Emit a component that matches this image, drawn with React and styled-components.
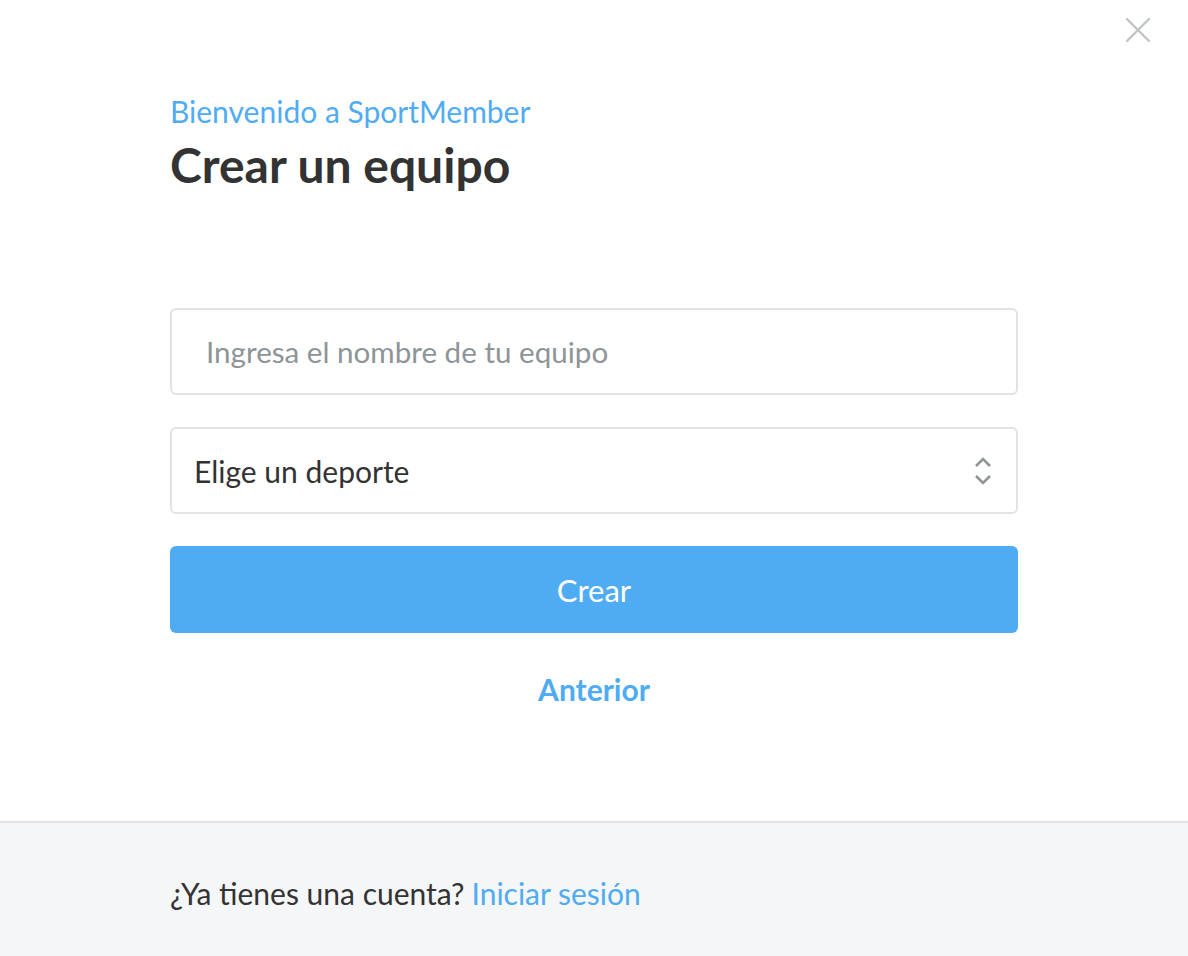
import React from "react";
import styled, { createGlobalStyle } from "styled-components";

const Global = createGlobalStyle`
  html, body { margin: 0; padding: 0; background: #fff; }
  body { font-family: Lato, "Noto Sans", sans-serif; color: #333; }
  * { box-sizing: border-box; }
`;

const Page = styled.div`
  width: 1188px;
  height: 956px;
  display: flex;
  flex-direction: column;
  position: relative;
`;

const Close = styled.button`
  position: absolute;
  top: 18px;
  right: 38px;
  width: 24px;
  height: 24px;
  padding: 0;
  border: none;
  background: none;
  display: flex;
  align-items: center;
  justify-content: center;
`;

const Main = styled.main`
  flex: 1;
  display: flex;
  flex-direction: column;
  padding: 93px 170px 0;
`;

const Welcome = styled.div`
  font-size: 30px;
  line-height: 36px;
  color: #50acf2;
`;

const Title = styled.h1`
  margin: 6px 0 0;
  font-size: 48px;
  line-height: 60px;
  font-weight: 700;
  color: #333;
`;

const Form = styled.form`
  margin-top: 113px;
  display: flex;
  flex-direction: column;
`;

const Field = styled.div`
  height: 87px;
  border: 2px solid #e2e3e5;
  border-radius: 6px;
  display: flex;
  align-items: center;
  padding: 0 ${(p) => p.$pad}px;
  margin-bottom: ${(p) => p.$mb}px;
  font-size: ${(p) => (p.$placeholder ? 29.6 : 30)}px;
  color: ${(p) => (p.$placeholder ? "#8e9497" : "#333")};
  justify-content: space-between;
`;

const Button = styled.button`
  height: 87px;
  border: none;
  border-radius: 6px;
  background: #50acf2;
  color: #fff;
  font-family: Lato, "Noto Sans", sans-serif;
  font-size: 31px;
  font-weight: 400;
`;

const Back = styled.a`
  margin-top: 38px;
  align-self: center;
  font-size: 30px;
  line-height: 36px;
  font-weight: 700;
  color: #50acf2;
  text-decoration: none;
`;

const Footer = styled.footer`
  height: 135px;
  border-top: 2px solid #e2e3e5;
  background: #f5f6f8;
  display: flex;
  align-items: center;
  padding: 7px 170px 0;
  font-size: 30px;
  color: #333;
`;

const Link = styled.a`
  color: #50acf2;
  margin-left: 7px;
`;

export default function App() {
  return (
    <Page>
      <Global />
      <Close aria-label="Cerrar">
        <svg width="24" height="24" viewBox="0 0 24 24">
          <path d="M1 1 L23 23 M23 1 L1 23" stroke="#c1c5c8" strokeWidth="2.4" strokeLinecap="square" />
        </svg>
      </Close>
      <Main>
        <Welcome>Bienvenido a SportMember</Welcome>
        <Title>Crear un equipo</Title>
        <Form>
          <Field $pad={34} $mb={32} $placeholder>Ingresa el nombre de tu equipo</Field>
          <Field $pad={22} $mb={32}>
            Elige un deporte
            <svg width="18" height="32" viewBox="0 0 18 32" style={{ marginRight: 2 }}>
              <path d="M2 11 L9 4 L16 11 M2 21 L9 28 L16 21" stroke="#8e9497" strokeWidth="2.6" fill="none" />
            </svg>
          </Field>
          <Button type="button">Crear</Button>
          <Back href="#">Anterior</Back>
        </Form>
      </Main>
      <Footer>
        ¿Ya tienes una cuenta?<Link>Iniciar sesión</Link>
      </Footer>
    </Page>
  );
}
